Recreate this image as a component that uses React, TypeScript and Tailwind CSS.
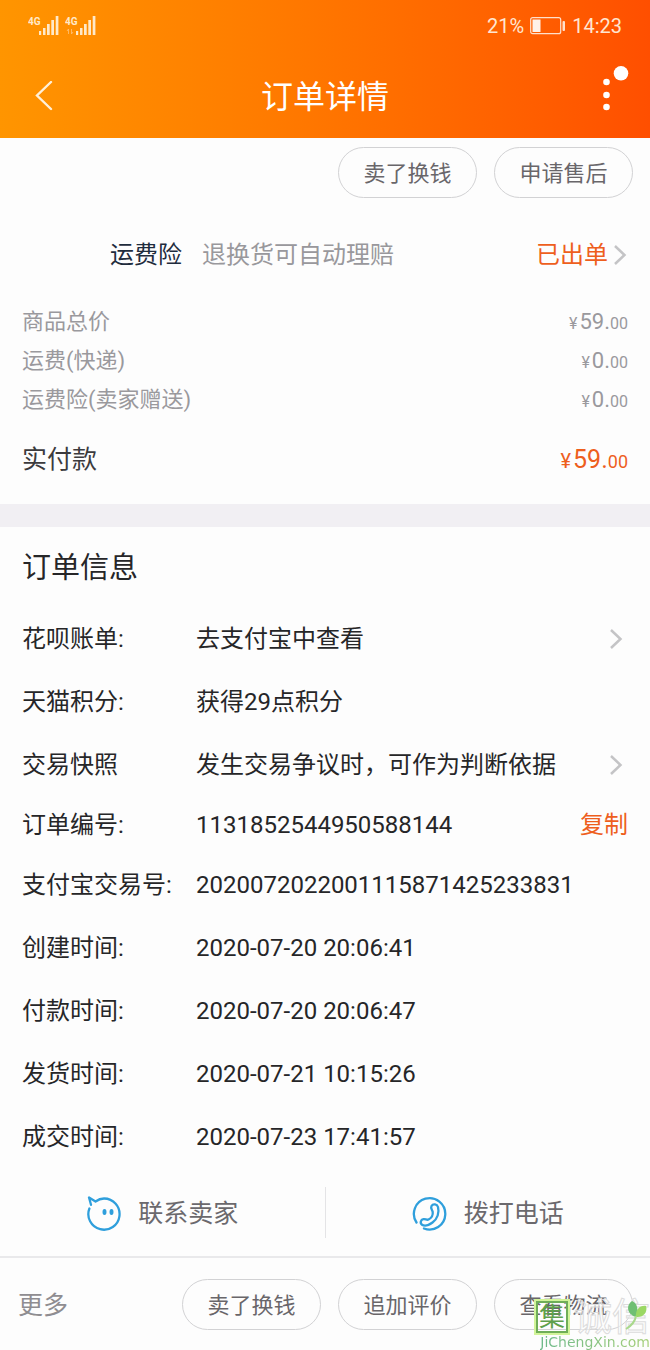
import clsx from "clsx"
import type { ReactNode } from "react"

const prices = [
  { label: "商品总价", whole: "59", cents: "00" },
  { label: "运费(快递)", whole: "0", cents: "00" },
  { label: "运费险(卖家赠送)", whole: "0", cents: "00" },
]

type OrderRow = {
  label: string
  value: string
  link?: boolean
  copy?: boolean
}

const orderRows: OrderRow[] = [
  { label: "花呗账单:", value: "去支付宝中查看", link: true },
  { label: "天猫积分:", value: "获得29点积分" },
  { label: "交易快照", value: "发生交易争议时，可作为判断依据", link: true },
  { label: "订单编号:", value: "1131852544950588144", copy: true },
  { label: "支付宝交易号:", value: "2020072022001115871425233831" },
  { label: "创建时间:", value: "2020-07-20 20:06:41" },
  { label: "付款时间:", value: "2020-07-20 20:06:47" },
  { label: "发货时间:", value: "2020-07-21 10:15:26" },
  { label: "成交时间:", value: "2020-07-23 17:41:57" },
]

function Signal({ data }: { data?: boolean }) {
  return (
    <svg width="32" height="22" viewBox="0 0 32 22" fill="#ffe9c9">
      <text x="0" y="10" fontSize="10" fontWeight="700" fontFamily="Roboto, sans-serif">4G</text>
      <rect x="11" y="16" width="2.200" height="4" />
      <rect x="15" y="13" width="2.500" height="7" />
      <rect x="19" y="9" width="2.700" height="11" />
      <rect x="23.300" y="5" width="2.700" height="15" />
      <rect x="27.700" y="1" width="2.700" height="19" />
      {data && (
        <path d="M3.500 19v-5l-1.500 2M6.500 14v5l1.500-2" fill="none" stroke="#ffc27a" strokeWidth="0.8" />
      )}
    </svg>
  )
}

function Battery() {
  return (
    <svg width="36" height="18" viewBox="0 0 36 18">
      <rect x="0.700" y="0.700" width="30" height="16" rx="2" fill="none" stroke="#ffe0cc" strokeWidth="1.200" />
      <rect x="2.500" y="2.500" width="8" height="12.500" fill="#fff1e8" />
      <rect x="32.500" y="4" width="2.500" height="10" rx="1" fill="#ffe0cc" />
    </svg>
  )
}

function Chevron() {
  return (
    <svg width="20" height="24" viewBox="0 0 20 24" fill="none" stroke="#c4c4c6" strokeWidth="2.500" className="shrink-0">
      <path d="M3 3l9.500 9L3 21" />
    </svg>
  )
}

function WangWang() {
  return (
    <svg width="36" height="36" viewBox="0 0 36 36" fill="none" stroke="#2f9fdc" strokeWidth="2.300" strokeLinecap="round" strokeLinejoin="round">
      <path d="M5 8.800L3 1.500l6.500 4C12.300 3.500 15 2.500 18 2.500a15.600 15.600 0 1 1-14.600 10" />
      <ellipse cx="18.500" cy="16" rx="1.200" ry="2.200" fill="#2f9fdc" strokeWidth="1.600" />
      <ellipse cx="25.500" cy="16" rx="1.200" ry="2.200" fill="#2f9fdc" strokeWidth="1.600" />
    </svg>
  )
}

function PhoneRing() {
  return (
    <svg width="36" height="36" viewBox="0 0 36 36" fill="none" stroke="#2f9fdc" strokeWidth="2.300" strokeLinecap="round" strokeLinejoin="round">
      <path d="M4.500 26.500A15.700 15.700 0 1 1 12 32.500" />
      <path d="M19.500 10c1.500-2.500 5.500-2 6.500 1 1.500 5.500-.5 12-5.500 15.500-3.500 2.500-8 3.800-10.500 2.200-2.300-1.500-1.200-5 1.300-5.500 2.200-.5 3.400 1.200 5.200.3 3-1.500 4.600-4.500 4.200-7.500-.3-2-2.500-3.500-1.200-6z" />
    </svg>
  )
}

function PillButton({ children }: { children: ReactNode }) {
  return (
    <button
      type="button"
      className="h-[51px] w-[139px] rounded-full border border-[#d2d2d4] pt-0.5 text-[22px] text-[#69666a] whitespace-nowrap"
    >
      {children}
    </button>
  )
}

function Price({ whole, cents, total }: { whole: string; cents: string; total?: boolean }) {
  return (
    <span className={clsx(total ? "text-[#ee5f1d]" : "text-[#9a999d]")}>
      <span className={clsx("mr-0.5", total ? "text-[20px]" : "text-[16px]")}>¥</span>
      <span className={clsx(total ? "text-[25px]" : "text-[22px]")}>{whole}.</span>
      <span className={clsx(total ? "text-[18px]" : "text-[16px]")}>{cents}</span>
    </span>
  )
}

function Watermark() {
  return (
    <div className="pointer-events-none absolute right-0 bottom-0 flex flex-col items-end">
      <div className="relative flex items-center gap-1.5">
        <span className="flex size-8 items-center justify-center border-2 border-[#6fae58] text-[26px] leading-none text-[#5fa04c] outline-2 outline-[#d2f49a]">
          集
        </span>
        <span className="text-[38px] leading-[34px] text-white/50 [-webkit-text-stroke:1px_#dcdcdc]">诚信</span>
        <svg width="24" height="32" viewBox="0 0 24 32" className="absolute top-0 right-0.5">
          <path d="M8 1c5 2 7 8 4 16C4 15 1 6 8 1z" fill="#6fbf73" />
          <path d="M12 17c-1-7 4-12 10-11 2 6-3 12-10 11z" fill="#9bd864" />
          <path d="M12 16c-1 6-5 10-10 13" fill="none" stroke="#a9d98c" strokeWidth="2" />
        </svg>
      </div>
      <span className="bg-linear-to-r from-[#6db98a] to-[#a5cf78] bg-clip-text font-['DejaVu_Sans'] text-[14px] leading-[16px] text-transparent">
        JiChengXin.com
      </span>
    </div>
  )
}

export default function App() {
  return (
    <div className="relative bg-[#fdfdfd] font-['Roboto','Noto_Sans_CJK_SC',sans-serif] text-[#262628]">
      <header className="bg-linear-to-r from-[#ff9500] to-[#ff4f00] text-white">
        <div className="flex h-[52px] items-center justify-between px-7 text-[20px] text-[#ffe6d2]">
          <div className="flex gap-[5px]">
            <Signal />
            <Signal data />
          </div>
          <div className="flex items-center gap-1.5">
            <span>21%</span>
            <Battery />
            <span>14:23</span>
          </div>
        </div>
        <nav className="flex h-[86px] items-center justify-between px-5 pt-1">
          <button type="button" aria-label="返回" className="w-10">
            <svg width="36" height="32" viewBox="0 0 36 32" fill="none" stroke="#fff0d8" strokeWidth="2.400" strokeLinecap="round">
              <path d="M31 1L17 14.500 31 28" />
            </svg>
          </button>
          <h1 className="text-[32px]">订单详情</h1>
          <button type="button" aria-label="更多" className="flex w-10 justify-end">
            <svg width="32" height="62" viewBox="0 0 32 62" fill="#fff">
              <circle cx="8.500" cy="16" r="3.300" />
              <circle cx="8.500" cy="29" r="3.300" />
              <circle cx="8.500" cy="41" r="3.300" />
              <circle cx="23" cy="7.300" r="7.300" />
            </svg>
          </button>
        </nav>
      </header>

      <section>
        <div className="flex justify-end gap-[17px] pt-[9px] pr-[17px]">
          <PillButton>卖了换钱</PillButton>
          <PillButton>申请售后</PillButton>
        </div>

        <a href="#" className="mt-2.5 flex h-[94px] items-center pr-[18px] pl-[110px] text-[24px]">
          <span className="text-[#1f2c3d]">运费险</span>
          <span className="ml-5 text-[#99989c]">退换货可自动理赔</span>
          <span className="mr-1 ml-auto text-[#ee5f1d]">已出单</span>
          <Chevron />
        </a>

        <dl className="px-[22px] pb-1">
          {prices.map((p) => (
            <div key={p.label} className="flex h-[39px] items-center justify-between text-[22px] text-[#9a999d]">
              <dt>{p.label}</dt>
              <dd><Price whole={p.whole} cents={p.cents} /></dd>
            </div>
          ))}
          <div className="flex h-[81px] items-center justify-between text-[25px] text-[#3c3b3e]">
            <dt>实付款</dt>
            <dd><Price whole="59" cents="00" total /></dd>
          </div>
        </dl>
      </section>

      <div className="h-[23px] bg-[#f1eff3]" />

      <section>
        <h2 className="flex h-20 items-center px-[22px] pt-1 text-[29px]">订单信息</h2>
        <dl className="px-[22px] text-[24px]">
          {orderRows.map((row) => (
            <div key={row.label} className={clsx("flex items-center whitespace-nowrap", row.copy ? "h-[57px]" : "h-[63px]")}>
              <dt className="w-[174px] shrink-0">{row.label}</dt>
              <dd className="flex grow items-center justify-between">
                {row.link ? (
                  <a href="#" className="flex grow items-center justify-between">
                    {row.value}
                    <Chevron />
                  </a>
                ) : (
                  row.value
                )}
                {row.copy && <button type="button" className="text-[#ee5f1d]">复制</button>}
              </dd>
            </div>
          ))}
        </dl>

        <div className="flex h-[88px] items-center text-[25px] text-[#6b696d]">
          <button type="button" className="flex h-[51px] flex-1 items-center justify-center gap-4 border-r border-[#e4e4e6] pt-1">
            <WangWang />
            联系卖家
          </button>
          <button type="button" className="flex h-[51px] flex-1 items-center justify-center gap-4 pt-1">
            <PhoneRing />
            拨打电话
          </button>
        </div>
      </section>

      <footer className="flex h-[94px] items-center gap-[17px] border-t-2 border-[#e9e9eb] pr-[17px] pl-[18px]">
        <button type="button" className="mr-auto pt-1 text-[25px] text-[#8f8d91]">更多</button>
        <PillButton>卖了换钱</PillButton>
        <PillButton>追加评价</PillButton>
        <PillButton>查看物流</PillButton>
      </footer>
      <Watermark />
    </div>
  )
}
